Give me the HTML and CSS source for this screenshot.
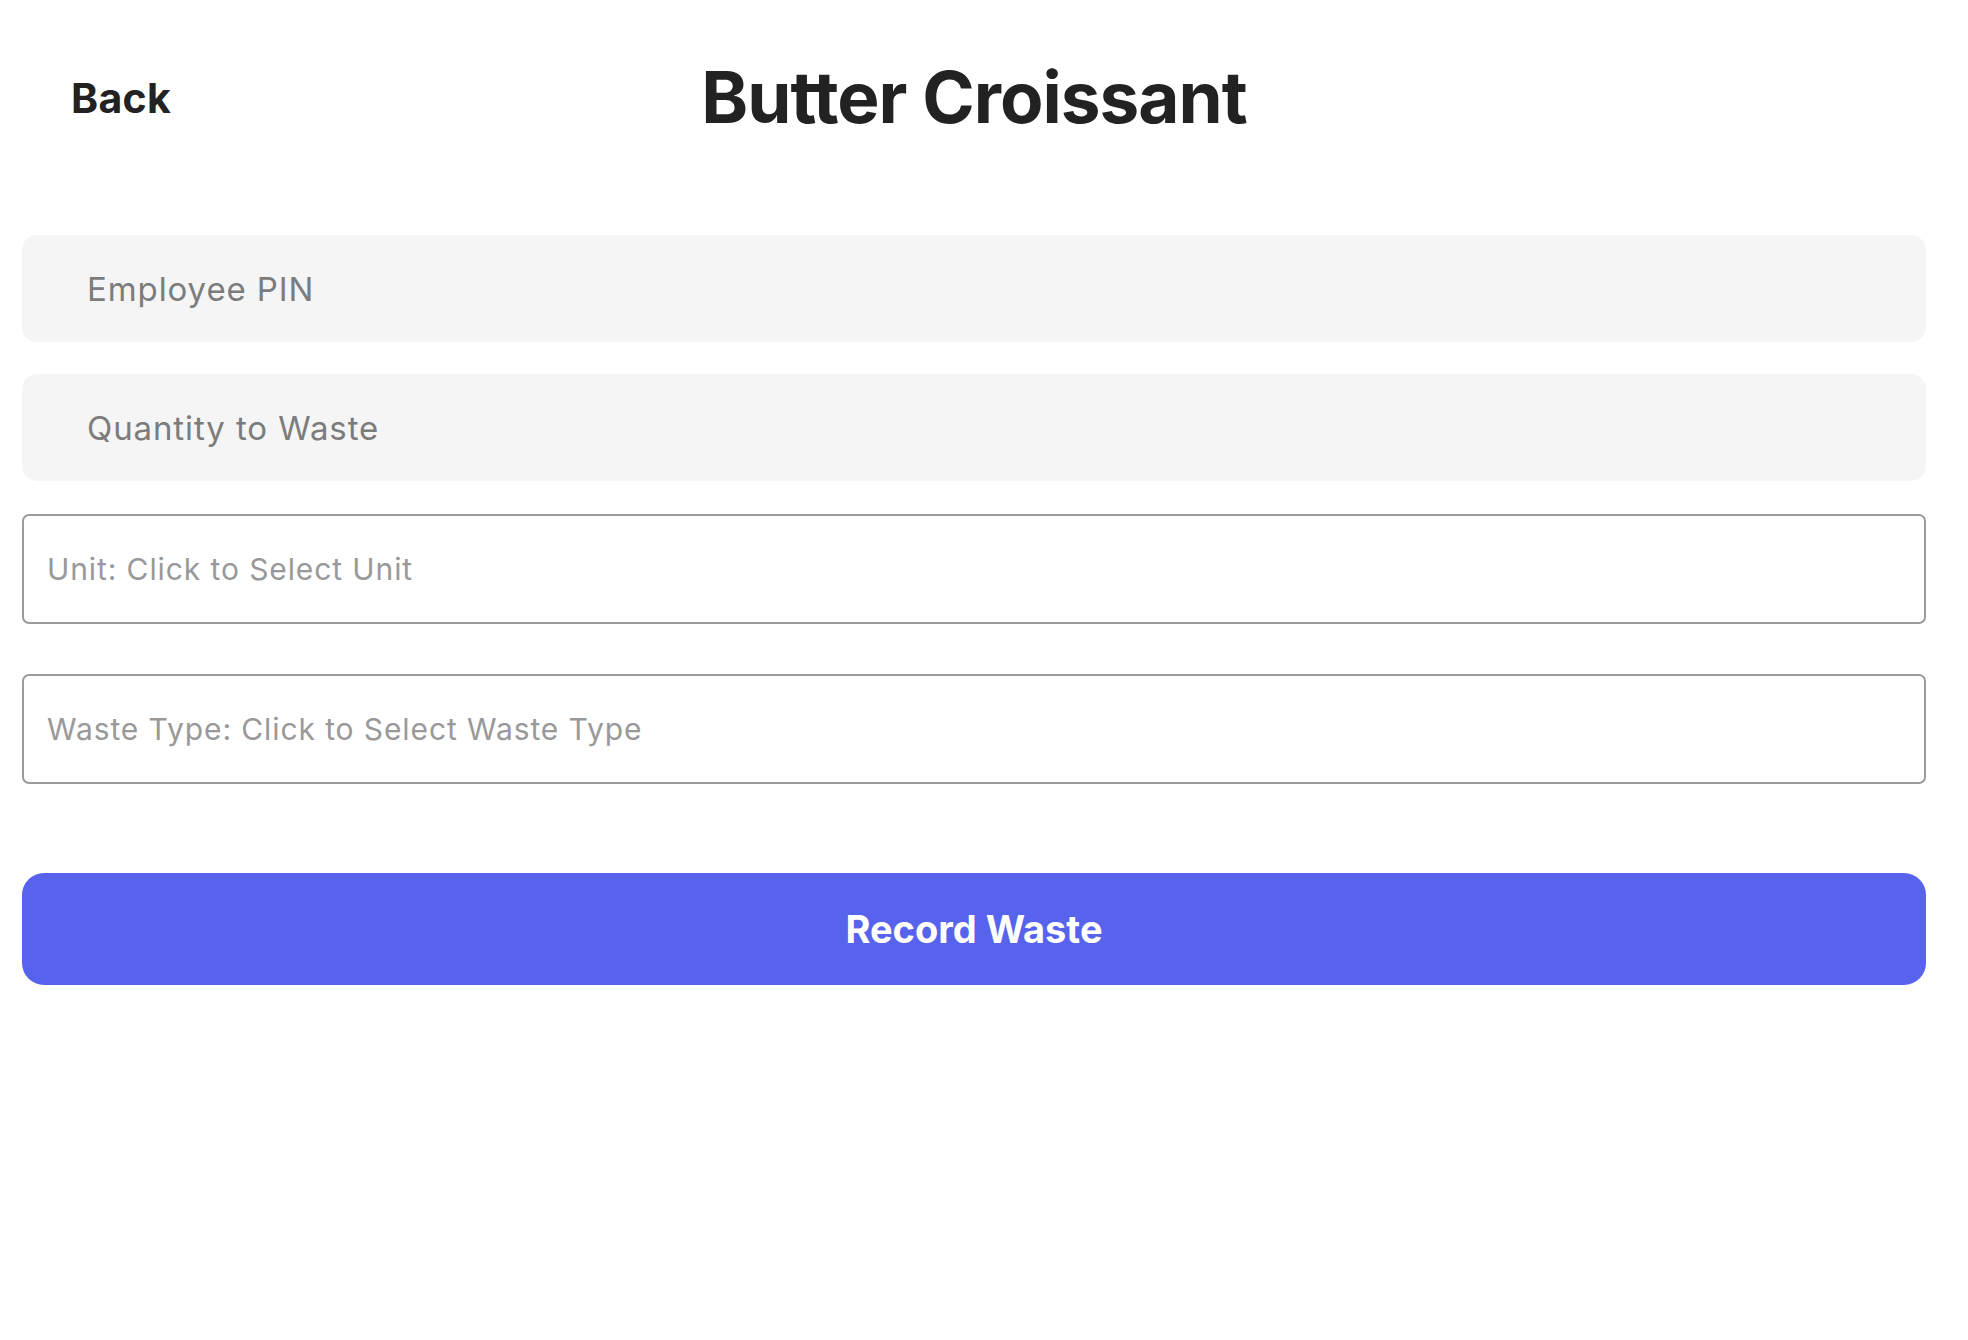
FILE: index.html
```html
<!DOCTYPE html>
<html lang="en">
<head>
<meta charset="utf-8">
<title>Butter Croissant</title>
<link rel="stylesheet" href="styles.css">
</head>
<body>
<div class="page">
  <header class="header">
    <div class="header-left"><a class="back" href="#">Back</a></div>
    <h1 class="title">Butter Croissant</h1>
    <div class="header-right"></div>
  </header>
  <form class="form">
    <input class="field field-pin" type="text" placeholder="Employee PIN">
    <input class="field field-qty" type="text" placeholder="Quantity to Waste">
    <div class="select select-unit">Unit: Click to Select Unit</div>
    <div class="select select-type">Waste Type: Click to Select Waste Type</div>
    <button class="submit" type="button">Record Waste</button>
  </form>
</div>
</body>
</html>
```
FILE: styles.css
```css
html, body {
  margin: 0;
  padding: 0;
  background: #ffffff;
}
body {
  font-family: Inter, "Noto Sans", "Liberation Sans", sans-serif;
  color: #222222;
}
.page {
  padding: 0 42px 0 22px;
}
.header {
  height: 196px;
  display: grid;
  grid-template-columns: 1fr auto 1fr;
  align-items: center;
}
.header-left {
  padding-left: 49px;
}
.back {
  font-size: 41px;
  font-weight: 700;
  color: #222222;
  text-decoration: none;
  letter-spacing: 0.3px;
}
.title {
  margin: 0;
  font-size: 71px;
  line-height: 1.2;
  font-weight: 700;
  color: #222222;
  letter-spacing: -1px;
}
.form {
  display: flex;
  flex-direction: column;
  margin-top: 39px;
}
.field {
  box-sizing: border-box;
  height: 107px;
  border: none;
  outline: none;
  border-radius: 15px;
  background: #f5f5f5;
  padding: 0 0 0 65px;
  font-family: Inter, "Noto Sans", "Liberation Sans", sans-serif;
  font-size: 33px;
  letter-spacing: 0.9px;
  color: #7c7c7c;
}
.field::placeholder {
  color: #7c7c7c;
}
.field-qty {
  margin-top: 32px;
}
.select {
  box-sizing: border-box;
  height: 110px;
  border: 2px solid #9b9b9b;
  border-radius: 7px;
  display: flex;
  align-items: center;
  padding-left: 23px;
  font-size: 30px;
  letter-spacing: 0.9px;
  color: #999999;
}
.select-unit {
  margin-top: 33px;
}
.select-type {
  margin-top: 50px;
}
.submit {
  margin-top: 89px;
  height: 112px;
  border: none;
  border-radius: 22px;
  background: #5762ed;
  color: #ffffff;
  font-family: Inter, "Noto Sans", "Liberation Sans", sans-serif;
  font-size: 38px;
  font-weight: 700;
  letter-spacing: 0;
  cursor: pointer;
}
```
